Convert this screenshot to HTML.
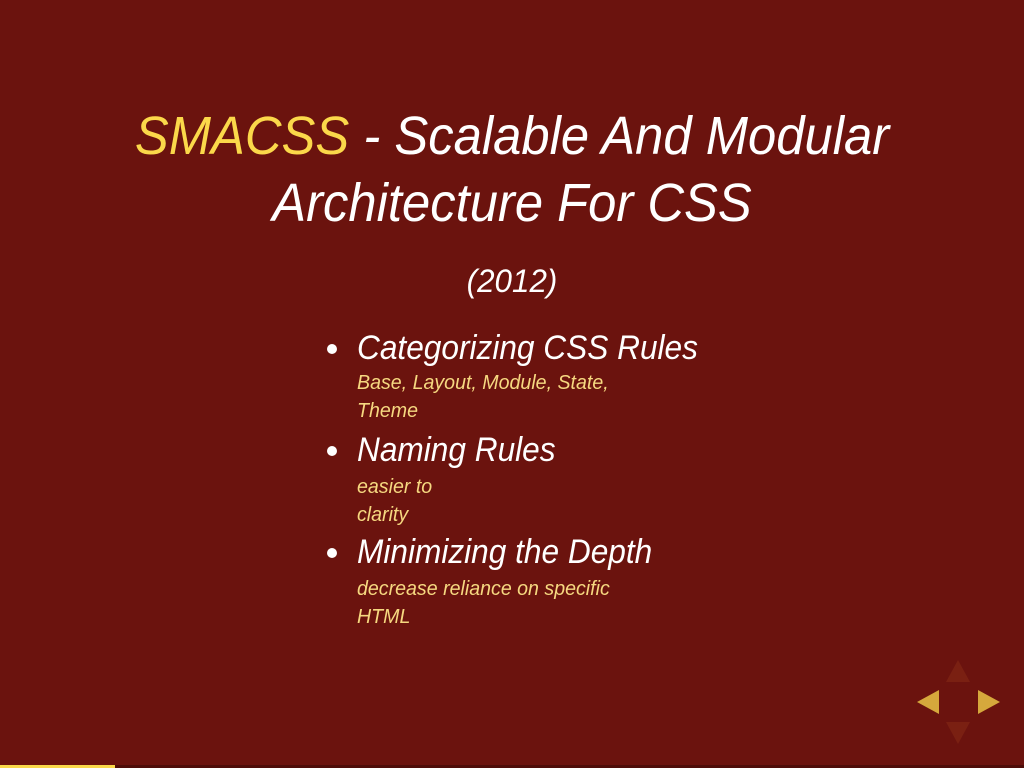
<!DOCTYPE html>
<html><head><meta charset="utf-8"><style>
html,body{margin:0;padding:0}
body{width:1024px;height:768px;background:#6b130e;position:relative;overflow:hidden;font-family:"Liberation Sans",sans-serif;font-style:italic;color:#fff}
.c{position:absolute;left:0;width:1024px;text-align:center;line-height:1;transform:scaleX(0.94);transform-origin:512px 0;white-space:nowrap}
.l{position:absolute;left:357px;line-height:1;transform-origin:0 0;white-space:nowrap}
.m{font-size:34px;color:#fff;transform:scaleX(0.93)}
.s{font-size:20px;color:#f6d880;transform:scaleX(0.98)}
.dot{position:absolute;left:327px;width:10px;height:10px;border-radius:50%;background:#fff}
.tri{position:absolute;width:0;height:0}
</style></head><body>
<div class="c" style="top:109px;font-size:54px"><span style="color:#fbd84a">SMACSS</span> - Scalable And Modular</div>
<div class="c" style="top:176px;font-size:54px">Architecture For CSS</div>
<div class="c" style="top:265px;font-size:32px;transform:scaleX(0.98)">(2012)</div>

<div class="dot" style="top:344px"></div>
<div class="l m" style="top:331px">Categorizing CSS Rules</div>
<div class="l s" style="top:373px">Base, Layout, Module, State,</div>
<div class="l s" style="top:401px">Theme</div>

<div class="dot" style="top:446px"></div>
<div class="l m" style="top:433px">Naming Rules</div>
<div class="l s" style="top:477px">easier to</div>
<div class="l s" style="top:505px">clarity</div>

<div class="dot" style="top:548px"></div>
<div class="l m" style="top:535px">Minimizing the Depth</div>
<div class="l s" style="top:579px">decrease reliance on specific</div>
<div class="l s" style="top:607px">HTML</div>

<div class="tri" style="left:946px;top:660px;border-left:12px solid transparent;border-right:12px solid transparent;border-bottom:22px solid #7a2012"></div>
<div class="tri" style="left:946px;top:722px;border-left:12px solid transparent;border-right:12px solid transparent;border-top:22px solid #7a2012"></div>
<div class="tri" style="left:917px;top:690px;border-top:12px solid transparent;border-bottom:12px solid transparent;border-right:22px solid #d6a83c"></div>
<div class="tri" style="left:978px;top:690px;border-top:12px solid transparent;border-bottom:12px solid transparent;border-left:22px solid #d6a83c"></div>

<div style="position:absolute;left:0;top:765px;width:1024px;height:3px;background:#4e0d09"></div>
<div style="position:absolute;left:0;top:765px;width:115px;height:3px;background:#fbd84a"></div>
</body></html>
